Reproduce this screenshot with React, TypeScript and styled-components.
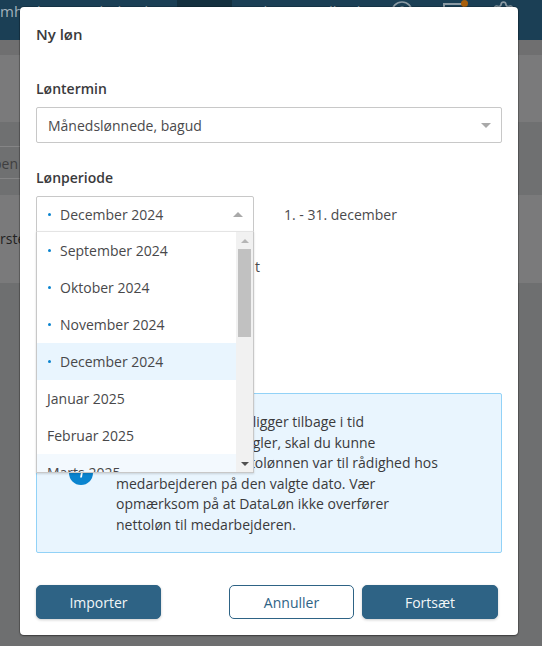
import React from "react";
import styled, { createGlobalStyle } from "styled-components";
import { HelpCircle, Settings } from "lucide-react";

const Global = createGlobalStyle`
  html, body { margin: 0; padding: 0; height: 100%; }
  body { font-family: "Open Sans", "Noto Sans", sans-serif; background: #6e6f70; overflow: hidden; }
  * { box-sizing: border-box; }
`;

const Page = styled.div`
  width: 542px;
  height: 646px;
  position: relative;
  overflow: hidden;
  background: #6e6f70;
`;

const TopBar = styled.div`
  height: 40px;
  background: #1b3f55;
  display: flex;
  align-items: flex-start;
  color: #a3b2bc;
  font-size: 15px;
  white-space: nowrap;
  overflow: hidden;
`;

const NavText = styled.span<{ $w: number }>`
  width: ${(p) => p.$w}px;
  flex: none;
  line-height: 23px;
`;

const ActiveTab = styled.span`
  width: 55px;
  height: 40px;
  flex: none;
  background: #14303f;
  line-height: 23px;
  text-align: center;
  margin-right: 18px;
`;

const IconSlot = styled.span<{ $w: number }>`
  width: ${(p) => p.$w}px;
  flex: none;
  display: flex;
  color: #8b9aa4;
  position: relative;
`;

const Badge = styled.span`
  position: absolute;
  left: 19px;
  top: 0;
  width: 7px;
  height: 7px;
  border-radius: 50%;
  background: #a85f0c;
`;

const Backdrop = styled.div`
  display: flex;
  flex-direction: column;
`;

const Band = styled.div<{ $h: number; $bg: string }>`
  height: ${(p) => p.$h}px;
  background: ${(p) => p.$bg};
  display: flex;
  align-items: center;
  overflow: hidden;
`;

const CutText = styled.div<{ $color: string; $shift: number }>`
  width: 20px;
  height: 100%;
  flex: none;
  overflow: hidden;
  white-space: nowrap;
  font-size: 14px;
  color: ${(p) => p.$color};
  line-height: 33px;
  text-indent: ${(p) => p.$shift}px;
  border-top: 1px solid #858586;
  border-bottom: 1px solid #858586;
`;

const CutPlain = styled(CutText)`
  border: none;
  line-height: 88px;
`;

const Modal = styled.div`
  position: absolute;
  left: 20px;
  top: 7px;
  width: 498px;
  height: 628px;
  background: #fff;
  border-radius: 4px;
  box-shadow: 0 0 0 1px rgba(0, 0, 0, 0.18), 0 1px 2px rgba(0, 0, 0, 0.35);
  padding: 16px;
  color: #3a3a3c;
  display: flex;
  flex-direction: column;
`;

const Title = styled.div`
  font-size: 15px;
  font-weight: 600;
  line-height: 22px;
  margin-bottom: 34px;
`;

const Label = styled.div`
  font-size: 14px;
  font-weight: 600;
  line-height: 20px;
  margin-bottom: 8px;
`;

const Select = styled.div<{ $open?: boolean }>`
  height: 36px;
  border: 1px solid #c8c8c8;
  border-radius: ${(p) => (p.$open ? "2px 2px 0 0" : "2px")};
  display: flex;
  align-items: center;
  font-size: 14px;
  color: #4a4a4c;
  background: #fff;
  padding: 0 10px 0 ${(p) => (p.$open ? 10 : 11)}px;
`;

const SelectValue = styled.span`
  flex: 1;
  display: flex;
  align-items: center;
`;

const Arrow = styled.span<{ $up?: boolean; $size?: number; $color?: string }>`
  width: 0;
  height: 0;
  flex: none;
  border-left: ${(p) => p.$size ?? 5.5}px solid transparent;
  border-right: ${(p) => p.$size ?? 5.5}px solid transparent;
  ${(p) => (p.$up ? "border-bottom" : "border-top")}: ${(p) => p.$size ?? 5.5}px solid ${(p) => p.$color ?? "#a9a9a9"};
`;

const PeriodBlock = styled.div`
  margin-top: 25px;
`;

const PeriodRow = styled.div`
  display: flex;
  align-items: center;
  gap: 30px;
  font-size: 14px;
  color: #4a4a4c;
`;

const PeriodSelectWrap = styled.div`
  width: 218px;
  flex: none;
  position: relative;
`;

const Dropdown = styled.div`
  position: absolute;
  left: 0;
  top: 35px;
  width: 218px;
  height: 242px;
  border: 1px solid #c8c8c8;
  border-top: 1px solid #e4e4e4;
  background: #fff;
  display: flex;
  overflow: hidden;
  z-index: 2;
  box-shadow: 0 1px 2px rgba(0, 0, 0, 0.15);
`;

const List = styled.div`
  flex: 1;
  overflow: hidden;
`;

const Option = styled.div<{ $bg?: string }>`
  height: 37px;
  display: flex;
  align-items: center;
  padding-left: 10px;
  font-size: 14px;
  color: #48484a;
  background: ${(p) => p.$bg ?? "transparent"};
  white-space: nowrap;
`;

const Dot = styled.span`
  width: 3px;
  height: 3px;
  border-radius: 50%;
  background: #0a84cf;
  margin: 0 9px 0 1px;
  flex: none;
`;

const ScrollTrack = styled.div`
  width: 17px;
  flex: none;
  background: #f1f1f1;
  display: flex;
  flex-direction: column;
  align-items: center;
`;

const ScrollButton = styled.div<{ $end?: boolean }>`
  height: 17px;
  flex: none;
  display: flex;
  align-items: center;
  justify-content: center;
  margin-top: ${(p) => (p.$end ? "auto" : "0")};
`;

const Thumb = styled.div`
  width: 13px;
  height: 88px;
  background: #c1c1c1;
`;

const StrayT = styled.div`
  padding: 25px 0 0 219px;
  font-size: 14px;
  line-height: 19px;
  color: #4a4a4c;
`;

const Info = styled.div`
  margin-top: 117px;
  height: 160px;
  border: 1px solid #92d2f7;
  border-radius: 2px;
  background: #e9f5fe;
  display: flex;
  padding: 0 10px 0 32px;
  gap: 23px;
  font-size: 14px;
  line-height: 20.6px;
  color: #3a3a3c;
`;

const InfoIconSlot = styled.div`
  width: 24px;
  flex: none;
  padding-top: 67px;
`;

const InfoText = styled.div`
  padding-top: 18px;
`;

const Footer = styled.div`
  margin-top: auto;
  padding: 0 4px 0 0;
  display: flex;
  gap: 8px;
`;

const Button = styled.button<{ $outline?: boolean; $w: number }>`
  width: ${(p) => p.$w}px;
  height: 34px;
  border-radius: 5px;
  font: 14px "Open Sans", sans-serif;
  border: 1px solid #2e6385;
  background: ${(p) => (p.$outline ? "#fff" : "#2e6385")};
  color: ${(p) => (p.$outline ? "#2e6385" : "#f2f6f8")};
  box-shadow: ${(p) => (p.$outline ? "none" : "0 1px 3px rgba(0,0,0,0.2)")};
  padding: 0;
`;

const Spacer = styled.div`
  flex: 1;
`;

const months = [
  { t: "September 2024", dot: true },
  { t: "Oktober 2024", dot: true },
  { t: "November 2024", dot: true },
  { t: "December 2024", dot: true, bg: "#e9f5fe" },
  { t: "Januar 2025" },
  { t: "Februar 2025" },
  { t: "Marts 2025", bg: "#f3f9fe" },
];

export default function App() {
  return (
    <Page>
      <Global />
      <TopBar>
        <NavText $w={72}>mhed</NavText>
        <NavText $w={105}>Medarbejdere</NavText>
        <ActiveTab>Løn</ActiveTab>
        <NavText $w={67}>Biler</NavText>
        <NavText $w={73}>Tilbud</NavText>
        <IconSlot $w={52}>
          <HelpCircle size={24} strokeWidth={1.6} />
        </IconSlot>
        <IconSlot $w={49}>
          <svg width="26" height="24" viewBox="0 0 26 24" fill="none" stroke="currentColor" strokeWidth="2">
            <path d="M2 4h20v16H2z" />
          </svg>
          <Badge />
        </IconSlot>
        <IconSlot $w={26}>
          <Settings size={25} strokeWidth={1.6} />
        </IconSlot>
      </TopBar>
      <Backdrop>
        <Band $h={15} $bg="#6f6f70" />
        <Band $h={67} $bg="#7a7a7b" />
        <Band $h={24} $bg="#6f7071" />
        <Band $h={33} $bg="#6f7071">
          <CutText $color="#3f3f40" $shift={-7}>pen</CutText>
        </Band>
        <Band $h={16} $bg="#6f7071" />
        <Band $h={88} $bg="#7a7a7b">
          <CutPlain $color="#222" $shift={0}>rste</CutPlain>
        </Band>
      </Backdrop>
      <Modal>
        <Title>Ny løn</Title>
        <Label>Løntermin</Label>
        <Select>
          <SelectValue>Månedslønnede, bagud</SelectValue>
          <Arrow />
        </Select>
        <PeriodBlock>
          <Label>Lønperiode</Label>
          <PeriodRow>
            <PeriodSelectWrap>
              <Select $open>
                <SelectValue>
                  <Dot />
                  December 2024
                </SelectValue>
                <Arrow $up />
              </Select>
              <Dropdown>
                <List>
                  {months.map((m) => (
                    <Option key={m.t} $bg={m.bg}>
                      {m.dot && <Dot />}
                      {m.t}
                    </Option>
                  ))}
                </List>
                <ScrollTrack>
                  <ScrollButton>
                    <Arrow $up $size={4} $color="#b5b5b5" />
                  </ScrollButton>
                  <Thumb />
                  <ScrollButton $end>
                    <Arrow $size={4} $color="#505050" />
                  </ScrollButton>
                </ScrollTrack>
              </Dropdown>
            </PeriodSelectWrap>
            <span>1. - 31. december</span>
          </PeriodRow>
        </PeriodBlock>
        <StrayT>t</StrayT>
        <Info>
          <InfoIconSlot>
            <svg width="24" height="24" viewBox="0 0 24 24">
              <circle cx="12" cy="12" r="12" fill="#0a84cf" />
              <path d="M12.4 9.5h1.8l-1.3 7h-1.8z" fill="#fff" />
              <circle cx="13.8" cy="7" r="1.2" fill="#fff" />
            </svg>
          </InfoIconSlot>
          <InfoText>
            Når lønperioden her ligger tilbage i tid
            <br />
            efter de gældende regler, skal du kunne
            <br />
            dokumentere, at nettolønnen var til rådighed hos
            <br />
            medarbejderen på den valgte dato. Vær
            <br />
            opmærksom på at DataLøn ikke overfører
            <br />
            nettoløn til medarbejderen.
          </InfoText>
        </Info>
        <Footer>
          <Button $w={125}>Importer</Button>
          <Spacer />
          <Button $w={125} $outline>Annuller</Button>
          <Button $w={136}>Fortsæt</Button>
        </Footer>
      </Modal>
    </Page>
  );
}
